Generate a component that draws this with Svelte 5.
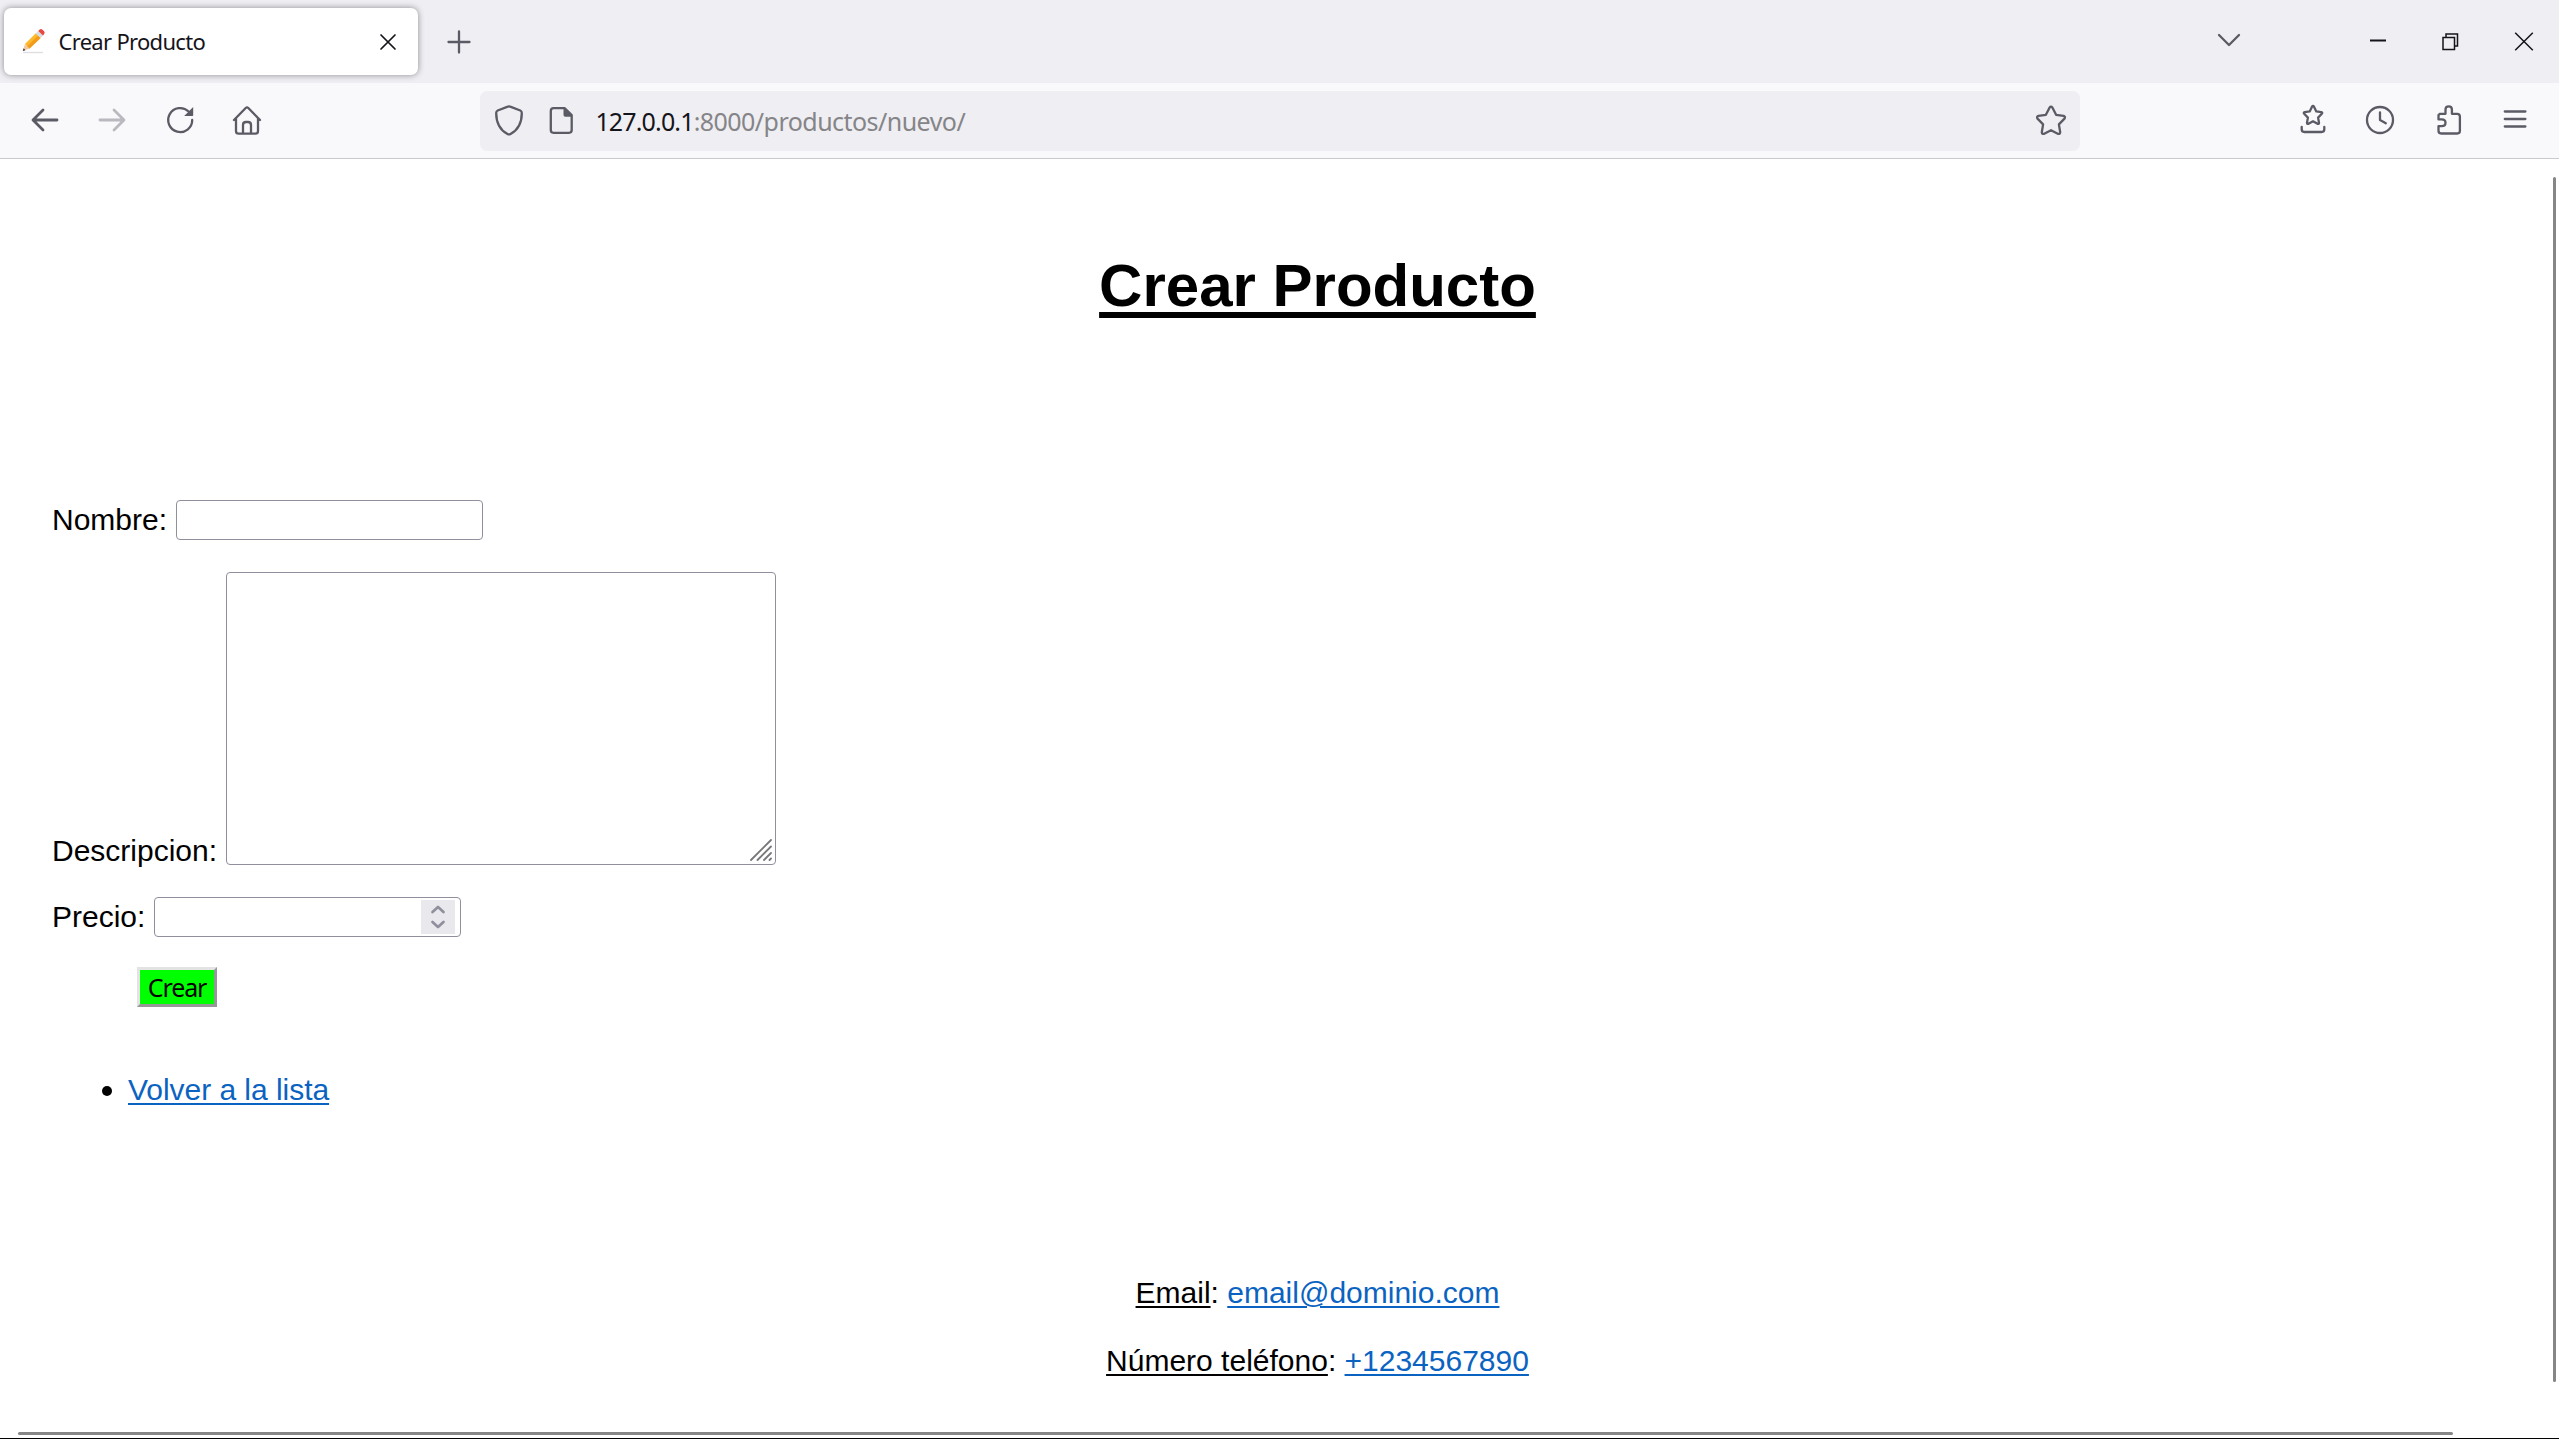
<script>
  let nombre = $state('');
  let descripcion = $state('');
  let precio = $state('');
</script>

<div class="window">
  <header class="tabs">
    <div class="tab">
      <svg class="pencil" viewBox="0 0 24 26">
        <path d="M1 24.500h20" stroke="#dedee2" stroke-width="1.4" />
        <path d="M.8 23l2.2-7 4.6 4.6z" fill="#f3c9a0" />
        <path d="M.8 23l.8-2.7 1.9 1.9z" fill="#3d3d3d" />
        <path d="M3 16L13.800 5.200l4.800 4.800L7.600 20.600z" fill="#fdb92c" />
        <path d="M5.200 18.300L16.100 7.500l2.500 2.500L7.600 20.600z" fill="#f39c1c" />
        <path d="M13.800 5.200l2.400-2.300 4.800 4.700-2.400 2.400z" fill="#d5dde4" />
        <path d="M16.200 2.900l1.500-1.400q1.600-1 3 .4l1.200 1.200q1.400 1.500.3 3l-1.200 1.500z" fill="#e8483f" />
      </svg>
      <span class="tab-title">Crear Producto</span>
      <svg class="tab-close" viewBox="0 0 16 16"><path d="M1 1l14 14M15 1L1 15" stroke="#15141a" stroke-width="1.7" stroke-linecap="round" /></svg>
    </div>
    <svg class="plus" viewBox="0 0 24 24"><path d="M12 1.5v21M1.5 12h21" stroke="#5b5b66" stroke-width="2.3" stroke-linecap="round" /></svg>
    <svg class="list" viewBox="0 0 24 16"><path d="M2 2l10 10 10-10" fill="none" stroke="#5b5b66" stroke-width="2.3" stroke-linecap="round" stroke-linejoin="round" /></svg>
    <div class="controls">
      <svg viewBox="0 0 20 20"><path d="M2 8.500h16" stroke="#15141a" stroke-width="2" /></svg>
      <svg viewBox="0 0 20 20"><path d="M2 5.500h11.500v12H2zM5 5.500V2h11.500v12H13.500" fill="none" stroke="#15141a" stroke-width="1.500" /></svg>
      <svg viewBox="0 0 20 20"><path d="M1.2 .7l17.6 17.6M18.800 .7L1.200 18.300" stroke="#15141a" stroke-width="1.500" /></svg>
    </div>
  </header>

  <nav class="toolbar">
    <div class="group left">
      <svg viewBox="0 0 30 30"><path d="M27 15H3.500M13 5L3 15l10 10" stroke-width="2.800" /></svg>
      <svg class="off" viewBox="0 0 30 30"><path d="M3 15h23.500M17 5l10 10-10 10" stroke-width="2.800" /></svg>
      <svg viewBox="0 0 30 30"><path d="M23.600 6.500A12 12 0 1 0 27.200 15" /><path d="M28.200 2v8.200q0 .8-.8.8h-8.200z" fill="#5b5b66" stroke="none" /></svg>
      <svg viewBox="0 0 30 30"><path d="M2 15L13.700 3q1.300-1.200 2.600 0L28 15M4 13.500V26q0 2.700 2.700 2.700h16.600Q26 28.700 26 26V13.500M11 28.500V20q0-3 3-3h2q3 0 3 3v8.500" /></svg>
    </div>
    <div class="url">
      <svg viewBox="0 0 30 30"><path d="M13.800 1.600L3.700 5.500Q2.200 6.200 2.200 8C2.200 17 4.500 24.200 13.500 29q1.500.8 3 0C25.500 24.200 27.800 17 27.800 8q0-1.800-1.500-2.500L16.200 1.600q-1.200-.5-2.400 0z" /></svg>
      <svg viewBox="0 0 30 30"><path d="M7.500 3.200h11.300l6.900 6.900v15q0 2.700-2.700 2.700H7.500q-2.700 0-2.700-2.700V5.900q0-2.700 2.700-2.700z" /><path d="M17.500 3h1.700L26 9.800v1.900h-6.700q-1.800 0-1.800-1.800z" fill="#5b5b66" stroke="none" /></svg>
      <p><span class="host">127.0.0.1</span><span class="path">:8000/productos/nuevo/</span></p>
      <svg class="star" viewBox="0 0 30 30"><path d="M13.500 2.700q1.500-2 3 0l3.600 7.100 7.500 1.100q2.100.7.900 2.700l-5.600 5.800 1.300 7.900q-.3 2.200-2.400 1.500L15 25.200l-6.800 3.600q-2.100.7-2.400-1.500l1.300-7.900-5.600-5.800q-1.200-2 .9-2.700l7.500-1.100z" /></svg>
    </div>
    <div class="group right">
      <svg viewBox="0 0 30 30"><path d="M14 1.700q1-1.500 2 0l2.300 4.700 5 .7q1.600.4.500 1.700l-3.700 3.800.9 5.200q-.1 1.500-1.500 1L15 16.300l-4.500 2.500q-1.400.5-1.500-1l.9-5.200-3.700-3.800q-1.100-1.300.5-1.700l5-.7z" /><path d="M3.700 22v2.300q0 2.700 2.700 2.700h17.200q2.700 0 2.700-2.700V22" /></svg>
      <svg viewBox="0 0 30 30"><circle cx="15" cy="15" r="13" /><path d="M15 7.500V15l5.800 3.300" /></svg>
      <svg viewBox="0 0 30 30"><path d="M6.700 8.800h5.800V4.500q0-3.200 3.200-3.200t3.200 3.200v4.300h5.300q2.700 0 2.700 2.700v14.300q0 2.700-2.700 2.700H8.200q-2.700 0-2.700-2.700v-4.600h3.200q3.800 0 3.800-3.400t-3.800-3.400H5.500v-4.400q0-.7 1.200-.7z" /></svg>
      <svg viewBox="0 0 30 30"><path d="M4.800 6.500h20.600M4.800 14h20.600M4.800 21.500h20.600" /></svg>
    </div>
  </nav>

  <main>
    <div class="page">
      <h1>Crear Producto</h1>
      <form>
        <label class="row"><span>Nombre:</span><input type="text" bind:value={nombre} /></label>
        <label class="row area">
          <span>Descripcion:</span>
          <span class="area-box">
            <textarea bind:value={descripcion}></textarea>
            <svg class="grip" viewBox="0 0 22 22"><path d="M1 21L21 1M7.500 21L21 7.500M14 21l7-7M19.500 21l1.500-1.500" stroke="#77777b" stroke-width="1.8" stroke-linecap="round" /></svg>
          </span>
        </label>
        <label class="row">
          <span>Precio:</span>
          <span class="number">
            <input type="text" inputmode="decimal" bind:value={precio} />
            <svg viewBox="0 0 34 34"><path d="M11.500 12l5.500-5 5.500 5M11.500 22l5.500 5 5.500-5" fill="none" stroke="#8f8f9d" stroke-width="2.700" stroke-linecap="round" stroke-linejoin="round" /></svg>
          </span>
        </label>
        <button type="button">Crear</button>
      </form>
      <ul><li><a href="#lista">Volver a la lista</a></li></ul>
      <footer>
        <p><u>Email</u>: <a href="#email">email@dominio.com</a></p>
        <p><u>Número teléfono</u>: <a href="#telefono">+1234567890</a></p>
      </footer>
    </div>
    <i class="vbar"></i>
    <i class="hbar"></i>
  </main>
</div>

<style>
  :global(body) { margin: 0; overflow: hidden; }
  .window { box-sizing: border-box; width: 2559px; height: 1439px; display: flex; flex-direction: column; overflow: hidden; background: #fff; border-bottom: 1px solid #000; }
  svg { display: block; flex: none; overflow: visible; }

  .tabs { height: 83px; flex: none; box-sizing: border-box; display: flex; align-items: center; background: #efeef3; padding-left: 4px; font-family: "Noto Sans", "Open Sans", sans-serif; }
  .tab { width: 414px; height: 67px; display: flex; align-items: center; background: #fff; border-radius: 7px; box-shadow: 0 0 6px rgba(0, 0, 0, .42); }
  .pencil { width: 24px; height: 26px; margin: 0 0 2px 18px; }
  .tab-title { margin: 0 0 1px 12.500px; flex: 1; font-size: 22px; line-height: 30px; letter-spacing: -.7px; color: #15141a; white-space: nowrap; }
  .tab-close { width: 16px; height: 16px; margin-right: 22px; }
  .plus { width: 24px; height: 24px; margin: 1px 0 0 28.500px; }
  .list { width: 24px; height: 16px; margin: 0 0 1px auto; }
  .controls { display: flex; gap: 53px; margin: 0 25px 0 127.500px; }
  .controls svg { width: 20px; height: 20px; }

  .toolbar { height: 76px; flex: none; box-sizing: border-box; display: flex; align-items: center; background: #f9f9fb; border-bottom: 1px solid #c9c9ce; padding: 0 29px 0 30px; }
  .toolbar svg { width: 30px; height: 30px; fill: none; stroke: #5b5b66; stroke-width: 2.3; stroke-linecap: round; stroke-linejoin: round; }
  .group { display: flex; margin-bottom: 1px; }
  .left { gap: 37.300px; }
  .right { gap: 37.500px; margin-left: auto; }
  .toolbar .off { opacity: .4; }
  .url { width: 1600px; height: 60px; box-sizing: border-box; margin-left: 218px; display: flex; align-items: center; background: #efeef3; border-radius: 7px; padding: 0 14px; }
  .url svg { margin-bottom: 1px; }
  .url svg + svg { margin-left: 22px; }
  .url p { margin: 0 0 0 19.500px; flex: 1; font: 25px/34px "Noto Sans", "Open Sans", sans-serif; white-space: nowrap; }
  .host { color: #15141a; letter-spacing: -.85px; }
  .path { color: #858588; letter-spacing: -.54px; }

  main { position: relative; flex: 1; min-height: 0; overflow: hidden; font: 30px/34px "Liberation Sans", Arial, sans-serif; color: #000; }
  .page { width: 2531px; padding: 93px 0 0 52px; }
  h1 { margin: 0; text-align: center; font-size: 60px; line-height: 68px; text-decoration: underline; text-decoration-thickness: 6px; text-underline-offset: 6px; }
  form { display: flex; flex-direction: column; align-items: flex-start; margin-top: 180px; }
  .row { display: flex; align-items: center; gap: 8.600px; height: 40px; }
  .area { height: 293px; align-items: flex-end; margin: 32px 0; }
  .area > span:first-child { margin-bottom: -3px; }
  input, textarea { box-sizing: border-box; width: 307px; height: 40px; margin: 0; padding: 0 6px; border: 1px solid #8f8f9d; border-radius: 4px; background: #fff; font: 25px/34px "Noto Sans", sans-serif; outline: none; display: block; }
  .area-box { position: relative; }
  textarea { width: 550px; height: 293px; resize: none; }
  .grip { position: absolute; right: 4px; bottom: 4px; width: 22px; height: 22px; }
  .number { position: relative; }
  .number svg { position: absolute; right: 6px; top: 3px; width: 34px; height: 34px; background: #e9e9ed; }
  button { box-sizing: border-box; width: 80px; height: 40px; margin: 30px 0 0 85px; padding: 0; border: 3px solid; border-color: #e3e3e3 #979797 #979797 #e3e3e3; background: #0f0; color: #000; font: 25px/34px "Noto Sans", sans-serif; letter-spacing: -1.100px; }
  ul { margin: 66px 0 0; padding-left: 76px; list-style: none; }
  li { display: flex; align-items: center; }
  li::before { content: ""; width: 10px; height: 10px; margin: 2px 0 0 -26px; border-radius: 50%; background: #000; }
  li a { margin-left: 16px; letter-spacing: -.04px; }
  a { color: #0b63c1; }
  a, u { text-decoration: underline; text-decoration-thickness: 2px; text-underline-offset: 3px; }
  footer { margin-top: 169px; display: grid; gap: 34px; text-align: center; }
  footer p { margin: 0; }
  .vbar, .hbar { position: absolute; background: #868686; border-radius: 2px; }
  .vbar { right: 3px; top: 18px; width: 3px; height: 1205px; }
  .hbar { left: 18px; bottom: 3px; width: 2435px; height: 3px; }
</style>
